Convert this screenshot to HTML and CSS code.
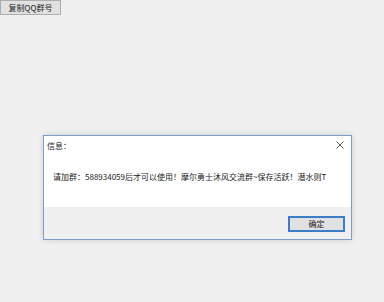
FILE: index.html
```html
<!DOCTYPE html>
<html lang="zh-CN">
<head>
    <meta charset="UTF-8">
    <title>复制QQ群号</title>
    <link rel="stylesheet" href="styles.css">
</head>
<body>
    <div class="stage">
        <button class="copy-btn">复制QQ群号</button>

        <div class="dialog">
            <div class="dialog-head">
                <span class="dialog-title">信息：</span>
                <svg class="close" width="8" height="8" viewBox="0 0 8 8">
                    <path d="M0.5 0.5 L7.5 7.5 M7.5 0.5 L0.5 7.5" stroke="#4a4a4a" stroke-width="0.9"/>
                </svg>
            </div>
            <div class="dialog-body">请加群：588934059后才可以使用！摩尔勇士沐风交流群~保存活跃！潜水则T</div>
            <div class="dialog-foot">
                <button class="ok-btn">确定</button>
            </div>
        </div>
    </div>
</body>
</html>
```

FILE: styles.css
```css
body {
    margin: 0;
    padding: 0;
    background-color: #f0f0f0;
    font-family: "Noto Sans CJK SC", "Noto Sans", sans-serif;
    color: #222;
}

.stage {
    width: 384px;
    height: 302px;
    position: relative;
    overflow: hidden;
}

.copy-btn {
    display: block;
    width: 61px;
    height: 15px;
    margin: 0;
    padding: 0;
    font-family: inherit;
    font-size: 8px;
    line-height: 13px;
    color: #222;
    background-color: #e1e1e1;
    border: 1px solid #adadad;
}

/* message box floats over the window */
.dialog {
    position: absolute;
    left: 43px;
    top: 135px;
    width: 307px;
    height: 103px;
    background-color: #fff;
    border: 1px solid #7d9dc4;
    box-shadow: 0 0 6px rgba(0, 0, 0, 0.15);
    display: flex;
    flex-direction: column;
}

.dialog-head {
    height: 18px;
    display: flex;
    align-items: center;
    justify-content: space-between;
    padding: 0 7px 0 3px;
}

.dialog-title {
    font-size: 8px;
}

.close {
    display: block;
}

.dialog-body {
    flex: 1;
    padding: 17px 0 0 9px;
    font-size: 8px;
    white-space: nowrap;
}

.dialog-foot {
    height: 32px;
    background-color: #f0f0f0;
    display: flex;
    align-items: center;
    justify-content: flex-end;
    padding-right: 6px;
}

.ok-btn {
    width: 57px;
    height: 16px;
    margin-top: 1px;
    padding: 0;
    font-family: inherit;
    font-size: 8px;
    color: #222;
    background-color: #e1e1e1;
    border: 2px solid #3b7dc8;
}
```
